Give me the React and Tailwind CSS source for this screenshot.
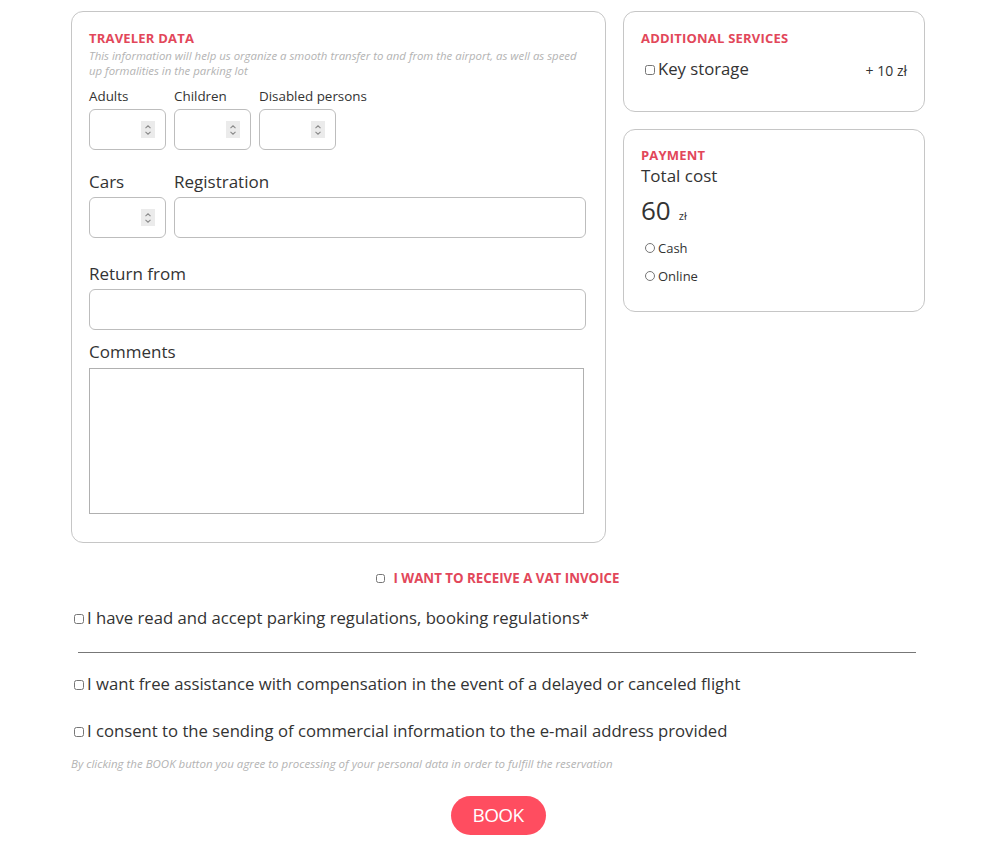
import { useState } from "react";

const numberFields = [
    { id: "adults", title: "Adults" },
    { id: "children", title: "Children" },
    { id: "disabled", title: "Disabled persons" },
];

const consents = [
    { id: "regulations", text: "I have read and accept parking regulations, booking regulations*", line: true },
    { id: "assistance", text: "I want free assistance with compensation in the event of a delayed or canceled flight" },
    { id: "marketing", text: "I consent to the sending of commercial information to the e-mail address provided" },
];

const Title = ({ children }) => (
    <h2 className="text-[13px] leading-[16px] font-bold uppercase text-[#e2475a] tracking-[0.2px]">{children}</h2>
);

// number input with the little stepper drawn on top (native one is hidden)
const NumberInput = () => (
    <div className="relative w-[77px] h-[41px]">
        <input type="number"
               className="w-full h-full border border-[#bdbdbd] rounded-[6px] px-[8px] pr-[28px] text-[13px] [appearance:textfield] [&::-webkit-inner-spin-button]:appearance-none [&::-webkit-outer-spin-button]:appearance-none" />
        <div className="absolute right-[11px] top-[12px] w-[14px] h-[17px] bg-[#ebebeb] flex flex-col items-center justify-center pointer-events-none">
            <svg width="8" height="12" viewBox="0 0 8 12" fill="none" stroke="#8a8a8a" strokeWidth="1.1">
                <path d="M1.5 4.2 L4 1.8 L6.5 4.2" />
                <path d="M1.5 7.8 L4 10.2 L6.5 7.8" />
            </svg>
        </div>
    </div>
);

const App = () => {
    const [payment, setPayment] = useState("");

    return (
        <div className="min-h-screen bg-white text-[#333] font-['Open_Sans',sans-serif]">
            <div className="ml-[71px] w-[854px] pt-[11px] pb-[20px]">
                <div className="flex gap-[17px] items-start">
                    {/* traveler */}
                    <div className="w-[535px] border border-[#c6c6c6] rounded-[12px] pl-[17px] pr-[19px] pt-[18px] pb-[28px]">
                        <Title>Traveler data</Title>
                        <p className="text-[11.4px] leading-[15px] italic text-[#b3b3b3] mt-[2px] pr-[4px]">
                            This information will help us organize a smooth transfer to and from the airport, as well as speed up formalities in the parking lot
                        </p>
                        <div className="flex gap-[8px] mt-[9px]">
                            {numberFields.map((item) => (
                                <div key={item.id} className="flex flex-col">
                                    <label className="text-[13.4px] leading-[18px] mb-[4px]">{item.title}</label>
                                    <NumberInput />
                                </div>
                            ))}
                        </div>
                        <div className="flex gap-[8px] mt-[20px]">
                            <div className="flex flex-col">
                                <label className="text-[17px] leading-[24px] mb-[3px]">Cars</label>
                                <NumberInput />
                            </div>
                            <div className="flex flex-col flex-1">
                                <label className="text-[17px] leading-[24px] mb-[3px]">Registration</label>
                                <input type="text" className="w-full h-[41px] border border-[#bdbdbd] rounded-[6px] px-[8px]" />
                            </div>
                        </div>
                        <label className="block text-[17px] leading-[24px] mt-[24px] mb-[3px]">Return from</label>
                        <input type="text" className="w-full h-[41px] border border-[#bdbdbd] rounded-[6px] px-[8px]" />
                        <label className="block text-[17px] leading-[24px] mt-[10px] mb-[4px]">Comments</label>
                        <textarea className="block w-[495px] h-[146px] border border-[#b0b0b0] resize-none p-[4px]" />
                    </div>

                    {/* right column */}
                    <div className="w-[302px] flex flex-col gap-[17px]">
                        <div className="h-[101px] border border-[#c6c6c6] rounded-[12px] px-[17px] pt-[18px]">
                            <Title>Additional services</Title>
                            <div className="flex items-center justify-between mt-[11px]">
                                <label className="flex items-center text-[16.7px] leading-[24px]">
                                    <input type="checkbox" className="w-[10px] h-[10px] m-0 ml-[4px] mr-[3px] mt-[2px]" />
                                    Key storage
                                </label>
                                <span className="text-[14px] mt-[3px]">+ 10 zł</span>
                            </div>
                        </div>
                        <div className="h-[183px] border border-[#c6c6c6] rounded-[12px] px-[17px] pt-[17px]">
                            <Title>Payment</Title>
                            <p className="text-[17px] leading-[24px] mt-[1px]">Total cost</p>
                            <p className="mt-[5px] leading-[34px]">
                                <span className="text-[26px]">60</span>
                                <span className="text-[11px] ml-[8px]">zł</span>
                            </p>
                            <div className="flex flex-col gap-[10px] mt-[6px]">
                                {["Cash", "Online"].map((opt) => (
                                    <label key={opt} className="flex items-center text-[13px] leading-[18px]">
                                        <input type="radio" name="payment" checked={payment === opt}
                                               onChange={() => setPayment(opt)}
                                               className="w-[10px] h-[10px] m-0 ml-[4px] mr-[3px]" />
                                        {opt}
                                    </label>
                                ))}
                            </div>
                        </div>
                    </div>
                </div>

                <div className="flex justify-center items-center mt-[27px]">
                    <input type="checkbox" className="w-[9px] h-[9px] m-0 mr-[8px]" />
                    <span className="text-[13.3px] leading-[16px] font-bold uppercase text-[#e2475a]">I want to receive a VAT invoice</span>
                </div>

                <div className="mt-[20px]">
                    {consents.map((item) => (
                        <div key={item.id}>
                            <label className="flex items-center text-[16.7px] leading-[24px]">
                                <input type="checkbox" className="w-[10px] h-[10px] m-0 ml-[3px] mr-[3px] mt-[2px]" />
                                {item.text}
                            </label>
                            {item.line ? (
                                <hr className="ml-[7px] mr-[9px] mt-[22px] mb-[19px] border-t border-[#777]" />
                            ) : (
                                <div className="h-[23px]" />
                            )}
                        </div>
                    ))}
                </div>

                <p className="text-[11.5px] leading-[15px] italic text-[#b3b3b3] mt-[-10px]">
                    By clicking the BOOK button you agree to processing of your personal data in order to fulfill the reservation
                </p>

                <div className="flex justify-center mt-[25px]">
                    <button className="w-[95px] h-[39px] rounded-full bg-[#ff4d60] text-white text-[19px] tracking-[-0.6px] leading-none">BOOK</button>
                </div>
            </div>
        </div>
    );
};

export default App;
